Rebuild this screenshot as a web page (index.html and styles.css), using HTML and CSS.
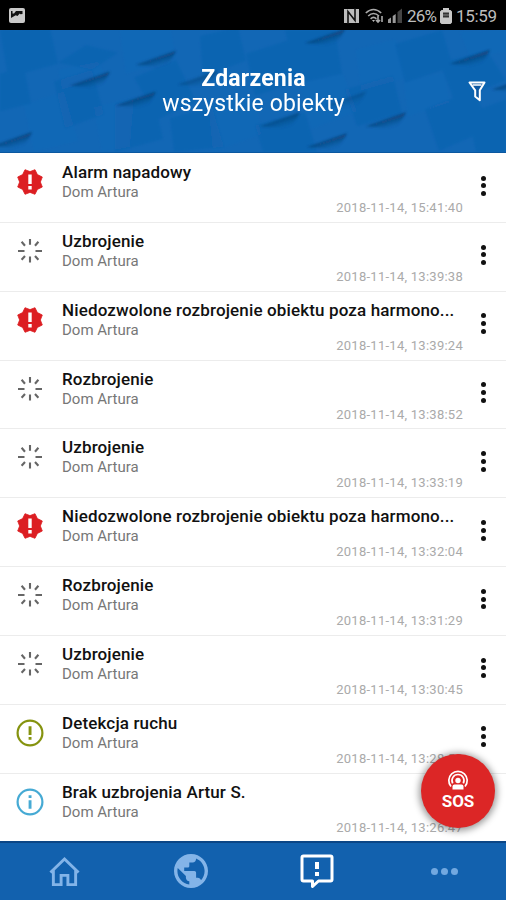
FILE: index.html
```
<!DOCTYPE html>
<html lang="pl">
<head>
<meta charset="utf-8">
<title>Zdarzenia</title>
<link rel="stylesheet" href="styles.css">
</head>
<body>
<svg class="defs" aria-hidden="true">
  <symbol id="alarm" viewBox="0 0 28 28"><path fill="#dc1e22" stroke="#dc1e22" stroke-width=".8" stroke-linejoin="round" d="M14 3.600L19 1.700L21.400 6.600L26.300 9L24.400 14L26.300 19L21.400 21.400L19 26.300L14 24.400L9 26.300L6.600 21.400L1.700 19L3.600 14L1.700 9L6.600 6.600L9 1.700z"/><path fill="#fff" d="M12.300 6.400h3.400v9.600h-3.400zM12.300 18h3.400v3.400h-3.400z"/></symbol>
  <symbol id="spin" viewBox="0 0 28 28"><path stroke="#666" stroke-width="2.100" fill="none" d="M14 2v5.800M14 19.500v6M2 14h6.500M19.500 14H26M5.600 4.800l3.400 4M22.400 4.800l-3.400 4M5.600 22.800l3.400-3.800M22.400 22.800L19 19"/></symbol>
  <symbol id="warn" viewBox="0 0 28 28"><circle cx="14" cy="14" r="12.400" fill="none" stroke="#85930f" stroke-width="2.200"/><path fill="#85930f" d="M12.600 7.200h2.900v8.700h-2.900zM12.600 18h2.900v2.800h-2.900z"/></symbol>
  <symbol id="info" viewBox="0 0 28 28"><circle cx="14" cy="14" r="12.400" fill="none" stroke="#46aad4" stroke-width="2.200"/><path fill="#46aad4" d="M12.600 7.200h2.900V10h-2.900zM12.600 12.300h2.900v8.500h-2.900z"/></symbol>
</svg>
<div class="screen">
  <div class="status">
    <svg class="pic" viewBox="0 0 16 15"><rect width="16" height="15" rx="2" fill="#c9c9c9"/><path fill="#111" d="M2 3h1.500v2.500H5L7 3h6.500v3l-2 .3-.8-.8-2.200 2.500-1.800-.7L2 10z"/></svg>
    <div class="status-right">
      <svg class="nfc" viewBox="0 0 15 16"><path fill="#bdbdbd" d="M0 1h15v14H0z"/><path fill="none" stroke="#111" stroke-width="1.600" d="M4 16V3.500l7 9V0"/></svg>
      <svg class="wifi" viewBox="0 0 20 16"><g fill="none" stroke="#aaa" stroke-width="1.600"><path d="M.8 5Q8.500-2 16.200 5M3.200 8Q8.500 3 14 8M5.600 10.800Q8.500 8 11.400 10.800"/><path d="M13 8v6M11 12l2 2 2-2M17 14V8"/></g><path fill="#bbb" d="M7 12h3l-1.500 2z"/></svg>
      <svg class="signal" viewBox="0 0 14 15"><path fill="#999" d="M0 15v-3.500l3-2V15zM4.700 15V8l3-2v9z"/><path fill="#444" d="M9.500 15V4L14 .5V15z"/></svg>
      <span class="pct">26%</span>
      <svg class="batt" viewBox="0 0 12 16"><path fill="#c8c8c8" d="M3 0h6v2h1.500L12 3.500v11L10.500 16h-9L0 14.500v-11L1.500 2H3z"/><path fill="#333" d="M3 4.500h6v5H3z"/><path stroke="#888" d="M3 7h6"/></svg>
      <span class="time">15:59</span>
    </div>
  </div>
  <header class="header">
    <svg class="pattern" viewBox="0 30 506 123" preserveAspectRatio="none">
      <defs>
        <linearGradient id="sh" gradientUnits="userSpaceOnUse" x1="20" y1="6" x2="23" y2="16"><stop offset="0" stop-color="#0a3a6c" stop-opacity=".85"/><stop offset=".5" stop-color="#0c4780" stop-opacity=".45"/><stop offset="1" stop-color="#0c4f90" stop-opacity="0"/></linearGradient>
        <filter id="soft" x="-20%" y="-50%" width="140%" height="200%"><feGaussianBlur stdDeviation="1.300"/></filter>
        <path id="fold" fill="url(#sh)" d="M0 14L40 0C36 8 32 13 28 17C18 15 8 15 0 14z"/>
      </defs>
      <g filter="url(#soft)">
        <path fill="#1060ac" d="M0 30l50-2 8 36-50 14zM92 70l-34-7 28-18 32 8zM54 82l38-12 12 45-39 14zM0 74l24-7 7 37-31 8zM134 78l42-18 20 42-38 18zM200 36l38-9 8 34-43 16zM246 54l43-14 12 42-46 14zM285 30l50 0 7 44-45 10zM395 44l47-14 11 37-48 16zM440 63l47-12 19 30-52 20zM425 110l50-20 14 40-50 22zM468 114l38-14v53h-30zM170 119l42-12 12 41-50 5zM115 105l38-10 10 45-48 13zM255 126l50-13 12 40h-54zM345 90l48-14 9 38-45 13z" opacity=".4"/>
        <path fill="#176fc1" d="M120 30l50-2 6 30-50 16zM58 70l40-8 8 15-44 13zM94 108l40-10-4 50-28 5zM24 105l40-13 14 50-44 10zM356 50l40-11 8 40-43 12zM300 84l43-10 14 38-46 18zM404 82l40-9 6 30-42 14zM208 104l46-9 7 40-48 18zM460 32l46-2v22l-36 5z" opacity=".12"/>
      </g>
      <g filter="url(#soft)">
        <use href="#fold" x="70" y="72"/><use href="#fold" x="136" y="51"/><use href="#fold" x="116" y="92"/><use href="#fold" x="-8" y="133"/><use href="#fold" x="178" y="71" opacity=".7"/>
        <use href="#fold" x="305" y="29"/><use href="#fold" x="450" y="50"/><use href="#fold" x="326" y="92" opacity=".5"/><use href="#fold" x="260" y="113" opacity=".8"/><use href="#fold" x="366" y="113"/><use href="#fold" x="307" y="134"/><use href="#fold" x="492" y="76"/>
      </g>
    </svg>
    <h1 class="title">Zdarzenia</h1>
    <div class="subtitle">wszystkie obiekty</div>
    <svg class="filter" viewBox="0 0 18 21"><path fill="#0d58a2" stroke="#fff" stroke-width="2" stroke-linejoin="round" d="M1.500 1.500h15l-4.700 7.800v9.900l-4.600-3.700V9.300z"/><path stroke="#fff" stroke-width="1.500" d="M4.500 4h9"/></svg>
  </header>
  <main class="list">
    <article class="row"><svg class="ico"><use href="#alarm"/></svg><div class="body"><h2>Alarm napadowy</h2><p>Dom Artura</p><time>2018-11-14, 15:41:40</time></div><div class="more"><i></i><i></i><i></i></div></article>
    <article class="row"><svg class="ico"><use href="#spin"/></svg><div class="body"><h2>Uzbrojenie</h2><p>Dom Artura</p><time>2018-11-14, 13:39:38</time></div><div class="more"><i></i><i></i><i></i></div></article>
    <article class="row"><svg class="ico"><use href="#alarm"/></svg><div class="body"><h2>Niedozwolone rozbrojenie obiektu poza harmono...</h2><p>Dom Artura</p><time>2018-11-14, 13:39:24</time></div><div class="more"><i></i><i></i><i></i></div></article>
    <article class="row"><svg class="ico"><use href="#spin"/></svg><div class="body"><h2>Rozbrojenie</h2><p>Dom Artura</p><time>2018-11-14, 13:38:52</time></div><div class="more"><i></i><i></i><i></i></div></article>
    <article class="row"><svg class="ico"><use href="#spin"/></svg><div class="body"><h2>Uzbrojenie</h2><p>Dom Artura</p><time>2018-11-14, 13:33:19</time></div><div class="more"><i></i><i></i><i></i></div></article>
    <article class="row"><svg class="ico"><use href="#alarm"/></svg><div class="body"><h2>Niedozwolone rozbrojenie obiektu poza harmono...</h2><p>Dom Artura</p><time>2018-11-14, 13:32:04</time></div><div class="more"><i></i><i></i><i></i></div></article>
    <article class="row"><svg class="ico"><use href="#spin"/></svg><div class="body"><h2>Rozbrojenie</h2><p>Dom Artura</p><time>2018-11-14, 13:31:29</time></div><div class="more"><i></i><i></i><i></i></div></article>
    <article class="row"><svg class="ico"><use href="#spin"/></svg><div class="body"><h2>Uzbrojenie</h2><p>Dom Artura</p><time>2018-11-14, 13:30:45</time></div><div class="more"><i></i><i></i><i></i></div></article>
    <article class="row"><svg class="ico"><use href="#warn"/></svg><div class="body"><h2>Detekcja ruchu</h2><p>Dom Artura</p><time>2018-11-14, 13:28:53</time></div><div class="more"><i></i><i></i><i></i></div></article>
    <article class="row"><svg class="ico"><use href="#info"/></svg><div class="body"><h2>Brak uzbrojenia Artur S.</h2><p>Dom Artura</p><time>2018-11-14, 13:26:47</time></div></article>
  </main>
  <nav class="nav">
    <a><svg class="home" viewBox="0 0 32 32"><path fill="none" stroke="#83b4e8" stroke-width="3" d="M1.500 17L16 3l14.500 14M4.500 15v14.500h8V20h7v9.500h8V15"/></svg></a>
    <a><svg class="globe" viewBox="2 2 20 20"><path fill="#83b4e8" d="M12 2C6.480 2 2 6.480 2 12s4.480 10 10 10 10-4.480 10-10S17.520 2 12 2zm-1 17.930c-3.950-.49-7-3.850-7-7.930 0-.62.080-1.210.210-1.790L9 15v1c0 1.100.9 2 2 2v1.930zm6.900-2.540c-.26-.81-1-1.390-1.900-1.390h-1v-3c0-.55-.45-1-1-1H8v-2h2c.55 0 1-.45 1-1V7h2c1.100 0 2-.9 2-2v-.41c2.930 1.190 5 4.060 5 7.410 0 2.080-.8 3.970-2.100 5.390z"/></svg></a>
    <a><svg class="chat" viewBox="0 0 34 34"><path fill="none" stroke="#fff" stroke-width="3" stroke-linejoin="round" d="M3.500 2h27q1.500 0 1.500 1.500v22q0 1.500-1.500 1.500H18.500l-6 5.500V27h-9Q2 27 2 25.500v-22Q2 2 3.500 2z"/><path fill="#fff" d="M15 8h4v7h-4zM15 18h4v4h-4z"/></svg></a>
    <a class="dots"><i></i><i></i><i></i></a>
  </nav>
  <div class="sos">
    <svg viewBox="0 0 22 20"><g fill="none" stroke="#fff" stroke-width="1.700"><path d="M4 16.500A9.200 9.200 0 1 1 18 16.500M5.700 13.300a6 6 0 1 1 10.600 0"/></g><circle cx="11" cy="10.500" r="2.700" fill="#fff"/><path fill="#fff" d="M5.500 19.500v-3q0-2 2-2h7q2 0 2 2v3z"/></svg>
    <span>SOS</span>
  </div>
</div>
</body>
</html>
```
FILE: styles.css
```
* { box-sizing: border-box; }
body { margin: 0; font-family: Roboto, sans-serif; background: #fff; }
h1, h2, p { margin: 0; }
.defs { display: none; }
.screen { position: relative; width: 506px; height: 900px; overflow: hidden; display: flex; flex-direction: column; }

.status { height: 30px; flex: none; background: #000; color: #bdbdbd; display: flex; align-items: center; justify-content: space-between; padding: 0 9px; }
.pic { width: 16px; height: 15px; }
.status-right { display: flex; align-items: center; padding-top: 1px; font-size: 17px; line-height: 20px; }
.nfc { width: 15px; height: 16px; margin-right: 6px; }
.wifi { width: 20px; height: 16px; margin-right: 3px; }
.signal { width: 14px; height: 15px; margin-right: 5px; }
.pct { width: 30px; letter-spacing: -.8px; }
.batt { width: 12px; height: 16px; margin: 0 4px 0 3px; }
.time { width: 41px; letter-spacing: -.3px; }

.header { position: relative; height: 123px; flex: none; background: #1267b5; border-bottom: 1px solid #0b58a0; color: #fff; text-align: center; padding-top: 36px; }
.pattern { position: absolute; inset: 0; width: 100%; height: 100%; }
.title { position: relative; font-size: 23px; line-height: 25px; font-weight: 700; letter-spacing: .2px; left: .5px; }
.subtitle { position: relative; font-size: 23px; line-height: 25px; letter-spacing: .15px; left: .5px; }
.filter { position: absolute; left: 468px; top: 51px; width: 18px; height: 21px; }

.list { height: 688px; flex: none; overflow: hidden; padding-top: 1px; }
.row { height: 68.850px; display: flex; border-bottom: 1px solid #ececec; }
.ico { width: 28px; height: 28px; margin: 14px 18px 0 16px; flex: none; }
.body { width: 401px; flex: none; display: flex; flex-direction: column; padding-top: 8px; }
h2 { font-size: 17px; line-height: 20px; font-weight: 500; color: #111; white-space: nowrap; letter-spacing: .14px; }
.body p { font-size: 15px; line-height: 20px; color: #777; }
.body time { align-self: flex-end; font-size: 13px; line-height: 14px; margin-top: -1px; color: #aaa; letter-spacing: .260px; }
.more { display: flex; flex-direction: column; gap: 2.800px; padding: 21.700px 0 0 17.500px; }
.more i { width: 5px; height: 5px; border-radius: 50%; background: #111; }

.nav { flex: 1; background: #1261ae; border-top: 2px solid #0b4686; display: grid; grid-template-columns: repeat(4, 1fr); }
.nav a { display: flex; align-items: center; justify-content: center; padding: 0 0 1px 2px; }
.home { width: 31px; height: 31px; }
.globe { width: 34px; height: 34px; }
.chat { width: 34px; height: 34px; }
.nav .dots { gap: 3px; padding-left: 3px; }
.dots i { width: 7px; height: 7px; border-radius: 50%; background: #72a8e0; }

.sos { position: absolute; left: 421px; top: 754px; width: 74px; height: 74px; border-radius: 50%; background: #dc2626; box-shadow: 0 1px 7px 2px rgba(0,0,0,.4); color: #fff; display: flex; flex-direction: column; align-items: center; padding-top: 16px; }
.sos svg { width: 22px; height: 20px; }
.sos span { font-size: 17px; line-height: 20px; font-weight: 700; margin-top: 1px; }
```
